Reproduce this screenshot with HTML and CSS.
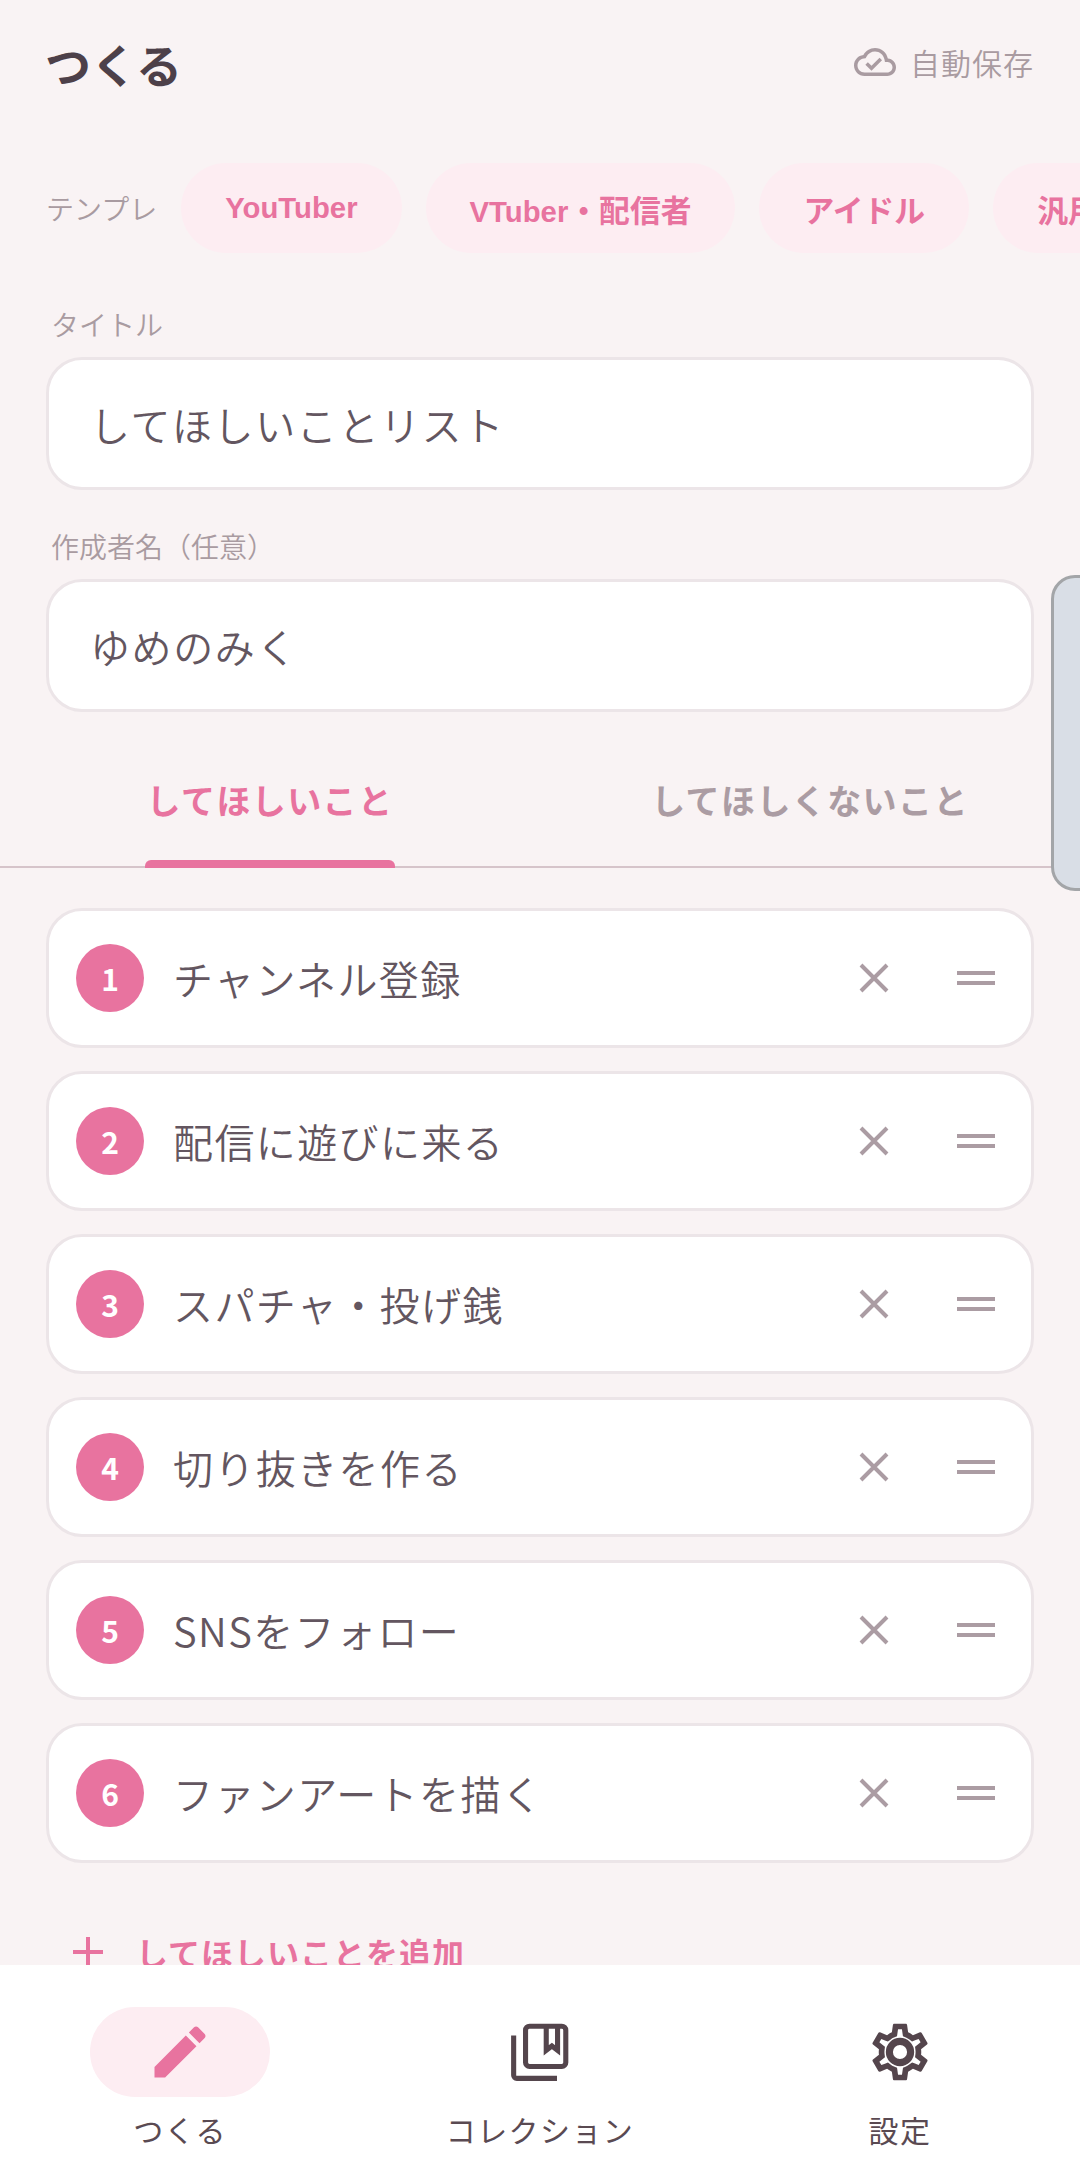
FILE: index.html
```html
<!DOCTYPE html>
<html lang="ja">
<head>
  <meta charset="UTF-8">
  <meta name="viewport" content="width=device-width, initial-scale=1.0">
  <title>つくる</title>
  <link rel="stylesheet" href="styles.css">
</head>
<body>
  <div class="app">
    <main class="content">
      <header class="top">
        <h1>つくる</h1>
        <div class="autosave">
          <svg viewBox="0 0 24 24" class="cloud"><path d="M19.35 10.04C18.67 6.59 15.64 4 12 4 9.11 4 6.6 5.64 5.35 8.04 2.34 8.36 0 10.91 0 14c0 3.31 2.69 6 6 6h13c2.76 0 5-2.24 5-5 0-2.64-2.05-4.78-4.65-4.96zM19 18H6c-2.21 0-4-1.79-4-4 0-2.05 1.53-3.76 3.56-3.97l1.07-.11.5-.95C8.08 7.14 9.94 6 12 6c2.62 0 4.88 1.86 5.39 4.43l.3 1.5 1.53.11c1.56.1 2.78 1.41 2.78 2.96 0 1.65-1.35 3-3 3zm-9-3.82l-2.09-2.09L6.5 13.5 10 17l6.01-6.01-1.41-1.41z"/></svg>
          <span>自動保存</span>
        </div>
      </header>

      <div class="templates">
        <span class="templates-label">テンプレ</span>
        <span class="chip"><span>YouTuber</span></span>
        <span class="chip"><span>VTuber<span class="ja">・配信者</span></span></span>
        <span class="chip"><span><span class="ja">アイドル</span></span></span>
        <span class="chip"><span><span class="ja">汎用</span></span></span>
      </div>

      <label class="field-label">タイトル</label>
      <div class="field">してほしいことリスト</div>
      <label class="field-label second">作成者名（任意）</label>
      <div class="field">ゆめのみく</div>

      <div class="tabs">
        <div class="tab active"><span>してほしいこと</span></div>
        <div class="tab"><span>してほしくないこと</span></div>
      </div>

      <ul class="items">
        <li class="item"><span class="num">1</span><span class="item-text">チャンネル登録</span>
          <svg class="x" viewBox="0 0 30 30"><path d="M2 2 28 28M28 2 2 28"/></svg><span class="drag"></span></li>
        <li class="item"><span class="num">2</span><span class="item-text">配信に遊びに来る</span>
          <svg class="x" viewBox="0 0 30 30"><path d="M2 2 28 28M28 2 2 28"/></svg><span class="drag"></span></li>
        <li class="item"><span class="num">3</span><span class="item-text">スパチャ・投げ銭</span>
          <svg class="x" viewBox="0 0 30 30"><path d="M2 2 28 28M28 2 2 28"/></svg><span class="drag"></span></li>
        <li class="item"><span class="num">4</span><span class="item-text">切り抜きを作る</span>
          <svg class="x" viewBox="0 0 30 30"><path d="M2 2 28 28M28 2 2 28"/></svg><span class="drag"></span></li>
        <li class="item"><span class="num">5</span><span class="item-text">SNSをフォロー</span>
          <svg class="x" viewBox="0 0 30 30"><path d="M2 2 28 28M28 2 2 28"/></svg><span class="drag"></span></li>
        <li class="item"><span class="num">6</span><span class="item-text">ファンアートを描く</span>
          <svg class="x" viewBox="0 0 30 30"><path d="M2 2 28 28M28 2 2 28"/></svg><span class="drag"></span></li>
      </ul>

      <div class="add"><span class="plus"></span><span>してほしいことを追加</span></div>
    </main>

    <div class="side-handle"></div>

    <nav class="bottom">
      <div class="nav-item active">
        <div class="nav-icon"><svg viewBox="0 0 24 24"><path d="M3 17.25V21h3.75L17.81 9.94l-3.75-3.75L3 17.25zM20.71 7.04c.39-.39.39-1.02 0-1.41l-2.34-2.34c-.39-.39-1.02-.39-1.41 0l-1.83 1.83 3.75 3.75 1.83-1.83z"/></svg></div>
        <span>つくる</span>
      </div>
      <div class="nav-item">
        <div class="nav-icon"><svg class="lined" viewBox="0 0 24 24"><rect x="6.9" y="2.9" width="14.2" height="14.2" rx="1.4"/><path d="M14.2 3v8.4l2-1.5 2 1.5V3"/><path d="M2.7 6.2v14c0 .6.5 1.1 1.1 1.1H18"/></svg></div>
        <span>コレクション</span>
      </div>
      <div class="nav-item">
        <div class="nav-icon"><svg viewBox="0 0 24 24"><path d="M19.43 12.98c.04-.32.07-.64.07-.98 0-.34-.03-.66-.07-.98l2.11-1.65c.19-.15.24-.42.12-.64l-2-3.46c-.09-.16-.26-.25-.44-.25-.06 0-.12.01-.17.03l-2.49 1c-.52-.4-1.08-.73-1.69-.98l-.38-2.65C14.46 2.18 14.25 2 14 2h-4c-.25 0-.46.18-.49.42l-.38 2.65c-.61.25-1.17.59-1.69.98l-2.49-1c-.06-.02-.12-.03-.18-.03-.17 0-.34.09-.43.25l-2 3.46c-.13.22-.07.49.12.64l2.11 1.65c-.04.32-.07.65-.07.98 0 .33.03.66.07.98l-2.11 1.65c-.19.15-.24.42-.12.64l2 3.46c.09.16.26.25.44.25.06 0 .12-.01.17-.03l2.49-1c.52.4 1.08.73 1.69.98l.38 2.65c.03.24.24.42.49.42h4c.25 0 .46-.18.49-.42l.38-2.65c.61-.25 1.17-.59 1.69-.98l2.49 1c.06.02.12.03.18.03.17 0 .34-.09.43-.25l2-3.46c.12-.22.07-.49-.12-.64l-2.11-1.65zm-1.98-1.71c.04.31.05.52.05.73 0 .21-.02.43-.05.73l-.14 1.13.89.7 1.08.84-.7 1.21-1.27-.51-1.04-.42-.9.68c-.43.32-.84.56-1.25.73l-1.06.43-.16 1.13-.2 1.35h-1.4l-.19-1.35-.16-1.13-1.06-.43c-.43-.18-.83-.41-1.23-.71l-.91-.7-1.06.43-1.27.51-.7-1.21 1.08-.84.89-.7-.14-1.13c-.03-.31-.05-.54-.05-.74s.02-.43.05-.73l.14-1.13-.89-.7-1.08-.84.7-1.21 1.27.51 1.04.42.9-.68c.43-.32.84-.56 1.25-.73l1.06-.43.16-1.13.2-1.35h1.39l.19 1.35.16 1.13 1.06.43c.43.18.83.41 1.23.71l.91.7 1.06-.43 1.27-.51.7 1.21-1.07.85-.89.7.14 1.13zM12 7a5 5 0 1 0 0 10 5 5 0 0 0 0-10zm0 7.5a2.5 2.5 0 1 1 0-5 2.5 2.5 0 0 1 0 5z"/></svg></div>
        <span>設定</span>
      </div>
    </nav>
  </div>
</body>
</html>
```

FILE: styles.css
```css
* {
  box-sizing: border-box;
}
html, body {
  margin: 0;
  padding: 0;
}
body {
  font-family: "Noto Sans CJK JP", sans-serif;
  background-color: #f9f3f4;
  color: #5a4a52;
}
.app {
  position: relative;
  width: 1080px;
  height: 2160px;
  overflow: hidden;
  display: flex;
  flex-direction: column;
}
.content {
  flex: 1;
  overflow: hidden;
  min-height: 0;
}

/* header */
.top {
  display: flex;
  justify-content: space-between;
  align-items: center;
  height: 130px;
  padding: 0 46px 0 45px;
}
.top h1 {
  margin: 0 0 4px;
  font-size: 46px;
  line-height: 60px;
  font-weight: 700;
  color: #4d4049;
}
.autosave {
  display: flex;
  align-items: center;
  gap: 14px;
  font-size: 30px;
  font-weight: 350;
  letter-spacing: 1px;
  color: #a99ba1;
  margin-bottom: 6px;
}
.cloud {
  width: 42px;
  height: 42px;
  fill: #a99ba1;
}

/* templates */
.templates {
  display: flex;
  align-items: center;
  gap: 24px;
  margin-top: 33px;
  padding-left: 46px;
  white-space: nowrap;
  height: 90px;
}
.templates-label {
  font-size: 28px;
  font-weight: 350;
  color: #a99ba1;
  width: 112px;
}
.chip {
  flex: none;
  display: flex;
  align-items: center;
  height: 90px;
  padding: 0 44px;
  border-radius: 45px;
  background-color: #fdedf2;
  color: #e8739f;
  font-family: "Liberation Sans", "Noto Sans CJK JP", sans-serif;
  font-size: 29.3px;
  font-weight: 700;
}
.chip .ja {
  font-family: "Noto Sans CJK JP", sans-serif;
  font-size: 30.8px;
}

/* fields */
.field-label {
  display: block;
  margin: 52px 0 14px 51px;
  font-size: 28px;
  font-weight: 350;
  line-height: 38px;
  color: #a99ba1;
}
.field-label.second {
  margin-top: 37px;
}
.field {
  margin: 0 46px;
  height: 133px;
  display: flex;
  align-items: center;
  padding: 0 41px;
  background-color: #fff;
  border: 3px solid #ece5e8;
  border-radius: 36px;
  font-size: 40px;
  font-weight: 350;
  letter-spacing: 1.6px;
  color: #635660;
}

/* tabs */
.tabs {
  display: flex;
  height: 156px;
  border-bottom: 2px solid #d6c4ca;
}
.tab {
  flex: 1;
  display: flex;
  justify-content: center;
  font-size: 34px;
  font-weight: 700;
  letter-spacing: 1.4px;
  color: #ab9ca3;
}
.tab span {
  position: relative;
  height: 100%;
  padding-top: 20px;
  display: flex;
  align-items: center;
}
.tab.active {
  color: #e8739f;
}
.tab.active span::after {
  content: "";
  position: absolute;
  left: -2px;
  right: -2px;
  bottom: -2px;
  height: 8px;
  background-color: #e8739f;
  border-radius: 6px 6px 0 0;
}

/* list */
.items {
  list-style: none;
  margin: 40px 46px 0;
  padding: 0;
  display: flex;
  flex-direction: column;
  gap: 23px;
}
.item {
  height: 140px;
  display: flex;
  align-items: center;
  padding-left: 27px;
  background-color: #fff;
  border: 3px solid #ece5e8;
  border-radius: 36px;
}
.num {
  flex: none;
  width: 68px;
  height: 68px;
  border-radius: 50%;
  background-color: #e8739f;
  color: #fff;
  font-size: 30px;
  font-weight: 700;
  display: flex;
  align-items: center;
  justify-content: center;
}
.item-text {
  flex: 1;
  margin-left: 29px;
  font-size: 40px;
  font-weight: 350;
  letter-spacing: 1.4px;
  color: #635660;
}
.x {
  width: 30px;
  height: 30px;
  fill: none;
  stroke: #ab9ca3;
  stroke-width: 4;
}
.drag {
  width: 38px;
  height: 14px;
  margin: 0 36px 0 68px;
  border-top: 4px solid #ab9ca3;
  border-bottom: 4px solid #ab9ca3;
}

/* add row */
.add {
  display: flex;
  align-items: center;
  margin: 66px 0 0 73px;
  gap: 33px;
  font-size: 32px;
  font-weight: 700;
  letter-spacing: 1px;
  color: #e8739f;
}
.plus {
  position: relative;
  width: 30px;
  height: 30px;
}
.plus::before, .plus::after {
  content: "";
  position: absolute;
  background-color: #e8739f;
}
.plus::before {
  left: 0;
  right: 0;
  top: 13px;
  height: 4px;
}
.plus::after {
  top: 0;
  bottom: 0;
  left: 13px;
  width: 4px;
}

/* floating handle on the right edge */
.side-handle {
  position: absolute;
  left: 1051px;
  top: 575px;
  width: 60px;
  height: 316px;
  background-color: #d9dee6;
  border: 3px solid #a3a5a8;
  border-radius: 24px;
}

/* bottom nav */
.bottom {
  flex: none;
  height: 195px;
  background-color: #fff;
  display: flex;
}
.nav-item {
  flex: 1;
  display: flex;
  flex-direction: column;
  align-items: center;
  padding-top: 42px;
  font-size: 30px;
  letter-spacing: 1.4px;
  color: #5a4a52;
}
.nav-icon {
  width: 180px;
  height: 90px;
  border-radius: 45px;
  display: flex;
  align-items: center;
  justify-content: center;
  margin-bottom: 10px;
}
.nav-icon svg {
  width: 68px;
  height: 68px;
  fill: #54454c;
}
.nav-icon svg.lined {
  fill: none;
  stroke: #54454c;
  stroke-width: 1.8;
}
.nav-item.active .nav-icon {
  background-color: #fdedf2;
}
.nav-item.active svg {
  fill: #e8739f;
}
```
